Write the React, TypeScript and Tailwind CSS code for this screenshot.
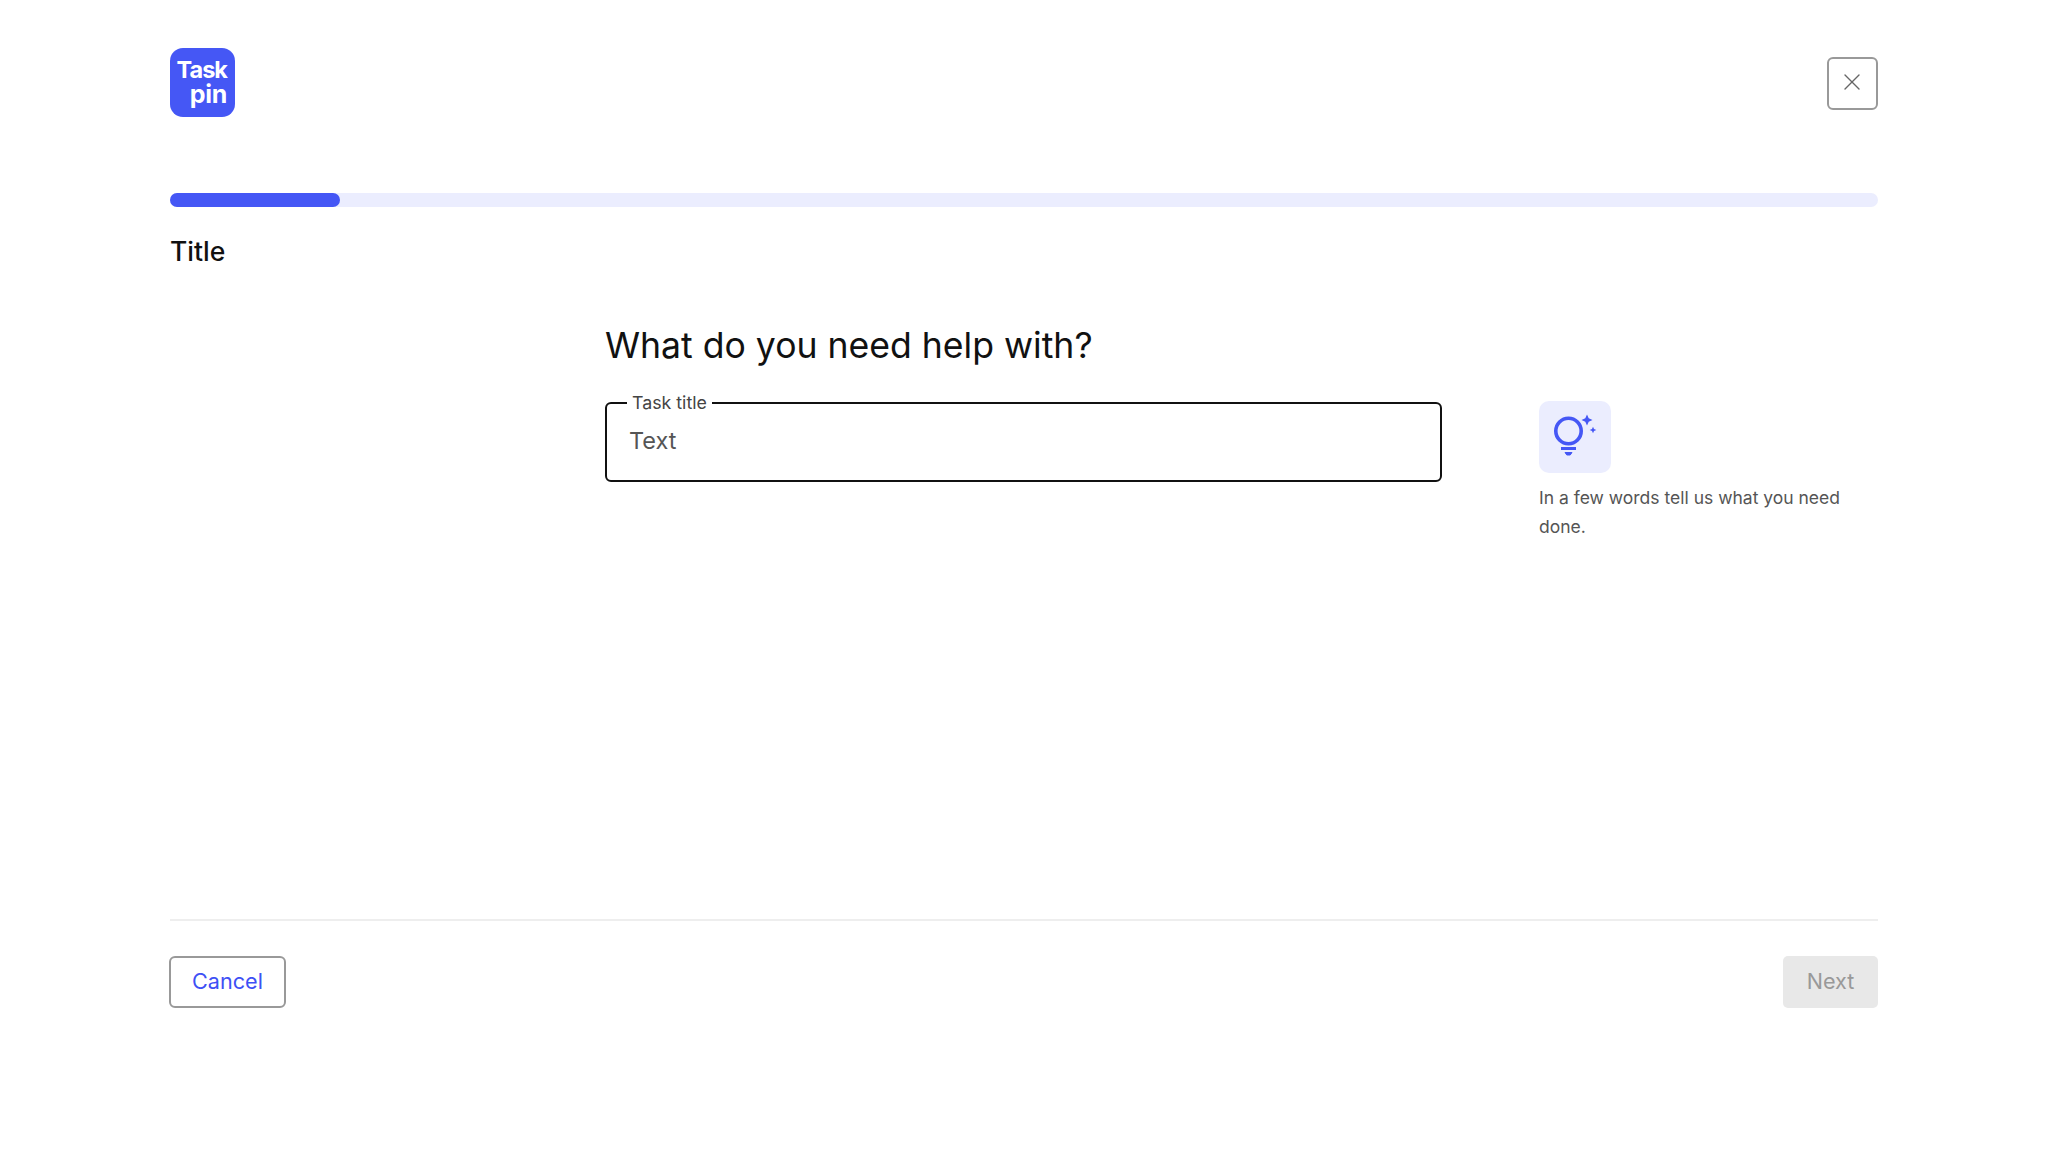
import React from 'react';
import { X } from 'lucide-react';

const Logo = () => (
  <div className="w-[65px] h-[69px] rounded-[13px] bg-[#4557f5] flex flex-col items-end justify-center pr-[8px] pb-[1px] text-white font-bold leading-[25px]">
    <span className="text-[23.5px] tracking-[-1px]">Task</span>
    <span className="text-[25px] tracking-[-0.3px]">pin</span>
  </div>
);

const TipIcon = () => (
  <div className="w-[72px] h-[72px] rounded-[10px] bg-[#ebedfe] flex items-center justify-center">
    <svg width="72" height="72" viewBox="0 0 72 72" fill="none">
      <circle cx="29.5" cy="30" r="12.7" stroke="#4557f5" strokeWidth="3.6" />
      <path d="M22 47.5h15" stroke="#4557f5" strokeWidth="3" />
      <path d="M26 51.5h7l-1.8 2.5h-3.4z" fill="#4557f5" stroke="#4557f5" strokeWidth="1" />
      <path d="M48 13.5l1.7 3.8 3.8 1.7-3.8 1.7-1.7 3.8-1.7-3.8-3.8-1.7 3.8-1.7z" fill="#4557f5" />
      <path d="M54 25.7l1 2.3 2.3 1-2.3 1-1 2.3-1-2.3-2.3-1 2.3-1z" fill="#4557f5" />
    </svg>
  </div>
);

export default function App() {
  return (
    <div className="w-full h-[1151px] bg-white flex flex-col px-[170px] font-['Inter',sans-serif]">
      <header className="flex items-start justify-between pt-[48px]">
        <Logo />
        <button className="mt-[9px] w-[51px] h-[53px] rounded-[6px] border-2 border-[#999999] flex items-center justify-center text-[#666666] pb-[3px] pr-[2px]">
          <X size={28} strokeWidth={1.2} />
        </button>
      </header>

      <div className="mt-[76px] h-[14px] rounded-full bg-[#ebedfe]">
        <div className="w-[170px] h-full rounded-full bg-[#4557f5]" />
      </div>

      <h1 className="mt-[26px] text-[26.5px] leading-[36px] font-medium text-[#111111]">Title</h1>

      <main className="mt-[53px] flex items-start pl-[435px]">
        <div className="w-[837px]">
          <h2 className="text-[35.6px] leading-[48px] text-[#111111]">What do you need help with?</h2>
          <fieldset className="mt-[23px] h-[89px] rounded-[6px] border-2 border-[#111111] px-[20px]">
            <legend className="px-[5px] text-[17.8px] leading-[20px] text-[#444444]">Task title</legend>
            <div className="text-[23.5px] leading-[32px] text-[#555555] pt-[12px] pl-[2px]">Text</div>
          </fieldset>
        </div>
        <aside className="ml-[97px] w-[339px] pt-[79px]">
          <TipIcon />
          <p className="mt-[10px] text-[17.5px] leading-[29px] text-[#555555]">
            In a few words tell us what you need done.
          </p>
        </aside>
      </main>

      <footer className="mt-auto mb-[143px] border-t-2 border-[#eeeeee] pt-[35px] flex items-center justify-between">
        <button className="-ml-px w-[117px] h-[52px] rounded-[6px] border-2 border-[#999999] text-[21.6px] text-[#3d50f5] pb-[2px]">Cancel</button>
        <button className="w-[95px] h-[52px] rounded-[5px] bg-[#e8e8e8] text-[21.6px] text-[#999999] pb-[2px]">Next</button>
      </footer>
    </div>
  );
}
